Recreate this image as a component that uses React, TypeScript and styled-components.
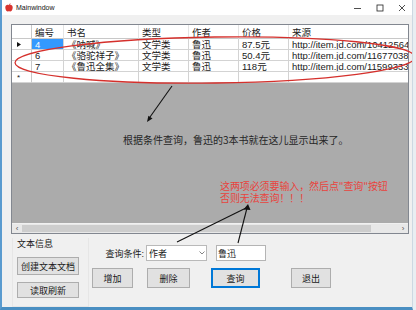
import React from 'react';
import styled, { createGlobalStyle } from 'styled-components';

const Global = createGlobalStyle`
  html, body { margin: 0; padding: 0; background: #e9eef2; }
  body { font-family: "Liberation Sans", "Noto Sans CJK SC", sans-serif; }
  * { box-sizing: border-box; }
`;

const Window = styled.div`
  position: relative;
  width: 413px;
  height: 310px;
  background: #f0f0f0;
  border-left: 2px solid #5a9bcf;
  border-bottom: 3px solid #4a8fc2;
  border-right: 1px solid #cdd8e2;
  display: flex;
  flex-direction: column;
  overflow: hidden;
`;

const TitleBar = styled.div`
  height: 15px;
  flex: none;
  background: #ffffff;
  display: flex;
  align-items: center;
  padding-left: 3px;
`;

const TitleText = styled.span`
  margin-left: 3px;
  font-size: 7px;
  color: #111;
  flex: 1;
`;

const Ctrl = styled.div<{ $w: number }>`
  width: ${(p) => p.$w}px;
  height: 15px;
  display: flex;
  align-items: center;
  justify-content: center;
`;

const Content = styled.div`
  flex: 1;
  display: flex;
  flex-direction: column;
  padding: 9px 3px 0 9px;
`;

const Grid = styled.div`
  height: 210px;
  flex: none;
  border: 1px solid #828790;
  background: #ababab;
  display: flex;
  flex-direction: column;
  font-size: 9.5px;
  color: #1a1a1a;
  overflow: hidden;
`;

const Row = styled.div<{ $h: number }>`
  display: grid;
  grid-template-columns: 20px 32px 75px 50px 50px 50px 1fr;
  height: ${(p) => p.$h}px;
  background: #ffffff;
  flex: none;
`;

const Cell = styled.div<{ $sel?: boolean; $head?: boolean }>`
  border-right: 1px solid ${(p) => (p.$head ? '#e4e4e4' : '#d3d3d3')};
  border-bottom: 1px solid ${(p) => (p.$head ? '#c8c8c8' : '#d3d3d3')};
  padding-left: 3px;
  display: flex;
  align-items: center;
  white-space: nowrap;
  overflow: hidden;
  background: ${(p) => (p.$sel ? '#3399ff' : '#ffffff')};
  color: ${(p) => (p.$sel ? '#ffffff' : '#1a1a1a')};
  &:last-child { border-right: none; }
`;

const RowHead = styled.div<{ $head?: boolean }>`
  border-right: 1px solid #c8c8c8;
  border-bottom: 1px solid ${(p) => (p.$head ? '#c8c8c8' : '#d3d3d3')};
  display: flex;
  align-items: center;
  padding-left: 5px;
  font-size: 8px;
  background: #ffffff;
`;

const Empty = styled.div`
  flex: 1;
`;

const ScrollBar = styled.div`
  height: 10px;
  flex: none;
  display: flex;
  background: #e8e8e8;
  border-top: 1px solid #f0f0f0;
`;

const ScrollArrow = styled.div`
  width: 10px;
  display: flex;
  align-items: center;
  justify-content: center;
  font-size: 8px;
  color: #555;
  line-height: 1;
`;

const Thumb = styled.div`
  width: 349px;
  background: #cdcdcd;
  margin: 1px 0;
`;

const Bottom = styled.div`
  flex: 1;
  display: flex;
  padding-top: 4px;
`;

const LeftGroup = styled.div`
  width: 77px;
  margin-left: 1px;
  display: flex;
  flex-direction: column;
  border: 1px solid #e6e6e6;
  border-top: none;
  padding: 0 0 8px 4px;
  margin-bottom: 3px;
`;

const GroupLabel = styled.div`
  font-size: 9px;
  color: #1a1a1a;
  height: 12px;
  line-height: 12px;
`;

const Btn = styled.div<{ $w: number; $h: number; $ml?: number; $mt?: number; $focus?: boolean }>`
  width: ${(p) => p.$w}px;
  height: ${(p) => p.$h}px;
  margin-left: ${(p) => p.$ml ?? 0}px;
  margin-top: ${(p) => p.$mt ?? 0}px;
  background: #e1e1e1;
  border: 1px solid ${(p) => (p.$focus ? '#0078d7' : '#adadad')};
  box-shadow: ${(p) => (p.$focus ? 'inset 0 0 0 1px #0078d7' : 'none')};
  display: flex;
  align-items: center;
  justify-content: center;
  font-size: 9px;
  color: #1a1a1a;
  flex: none;
`;

const RightArea = styled.div`
  display: flex;
  flex-direction: column;
  margin-left: 3px;
`;

const QueryRow = styled.div`
  display: flex;
  align-items: center;
  height: 16px;
  margin-top: 7px;
  padding-left: 10px;
`;

const QueryLabel = styled.div`
  width: 42px;
  text-align: right;
  font-size: 9px;
  color: #1a1a1a;
`;

const Combo = styled.div`
  width: 61px;
  height: 16px;
  margin-left: 2px;
  background: #fff;
  border: 1px solid #b9b9b9;
  display: flex;
  align-items: center;
  padding-left: 2px;
  font-size: 9px;
  color: #1a1a1a;
`;

const ComboText = styled.span`
  flex: 1;
`;

const TextBox = styled.div`
  width: 50px;
  height: 16px;
  margin-left: 9px;
  background: #fff;
  border: 1px solid #b4b4b4;
  display: flex;
  align-items: center;
  padding-left: 1px;
  font-size: 9px;
  color: #1a1a1a;
`;

const BtnRow = styled.div`
  display: flex;
  margin-top: 7px;
`;

const Overlay = styled.svg`
  position: absolute;
  left: -2px;
  top: 0;
  pointer-events: none;
`;

const Note = styled.div<{ $x: number; $y: number; $red?: boolean }>`
  position: absolute;
  left: ${(p) => p.$x - 2}px;
  top: ${(p) => p.$y}px;
  font-family: "Noto Sans CJK SC", sans-serif;
  font-size: 10px;
  line-height: 12px;
  color: ${(p) => (p.$red ? '#e8433d' : '#262626')};
  white-space: nowrap;
  letter-spacing: ${(p) => (p.$red ? '-0.1px' : '0')};
`;

const rows = [
  ['4', '《呐喊》', '文学类', '鲁迅', '87.5元', 'http://item.jd.com/1041256430'],
  ['6', '《骆驼祥子》', '文学类', '鲁迅', '50.4元', 'http://item.jd.com/11677038.html'],
  ['7', '《鲁迅全集》', '文学类', '鲁迅', '118元', 'http://item.jd.com/11599333.html'],
];

const headers = ['编号', '书名', '类型', '作者', '价格', '来源'];

export default function App() {
  return (
    <>
      <Global />
      <Window>
        <TitleBar>
          <svg width="8" height="9" viewBox="0 0 8 9">
            <path d="M4 2.2 C2.5 1.3 0.3 1.8 0.3 4.5 C0.3 6.8 1.8 8.8 3 8.6 C3.5 8.5 3.7 8.3 4 8.3 C4.3 8.3 4.5 8.5 5 8.6 C6.2 8.8 7.7 6.8 7.7 4.5 C7.7 1.8 5.5 1.3 4 2.2 Z" fill="#d8342f" />
            <path d="M4 2.2 C4.1 1.2 4.8 0.4 5.6 0.2 C5.4 1.2 4.8 1.9 4 2.2 Z" fill="#c0302a" />
          </svg>
          <TitleText>Mainwindow</TitleText>
          <Ctrl $w={22}>
            <svg width="8" height="8" viewBox="0 0 8 8"><line x1="0" y1="4.5" x2="7" y2="4.5" stroke="#222" strokeWidth="0.8" /></svg>
          </Ctrl>
          <Ctrl $w={22}>
            <svg width="8" height="8" viewBox="0 0 8 8"><rect x="1" y="1" width="6" height="6" fill="none" stroke="#222" strokeWidth="0.8" /></svg>
          </Ctrl>
          <Ctrl $w={21}>
            <svg width="8" height="8" viewBox="0 0 8 8"><path d="M1 1 L7 7 M7 1 L1 7" stroke="#222" strokeWidth="0.8" /></svg>
          </Ctrl>
        </TitleBar>
        <Content>
          <Grid>
            <Row $h={14}>
              <RowHead $head />
              {headers.map((h) => (
                <Cell key={h} $head>{h}</Cell>
              ))}
            </Row>
            {rows.map((r, i) => (
              <Row $h={11} key={i}>
                <RowHead>
                  {i === 0 && (
                    <svg width="4" height="5" viewBox="0 0 4 5"><path d="M0 0 L4 2.5 L0 5 Z" fill="#111" /></svg>
                  )}
                </RowHead>
                {r.map((c, j) => (
                  <Cell key={j} $sel={i === 0 && j === 0}>{c}</Cell>
                ))}
              </Row>
            ))}
            <Row $h={11}>
              <RowHead>*</RowHead>
              {headers.map((h) => (
                <Cell key={h} />
              ))}
            </Row>
            <Empty />
            <ScrollBar>
              <ScrollArrow>‹</ScrollArrow>
              <Thumb />
              <Empty />
              <ScrollArrow>›</ScrollArrow>
            </ScrollBar>
          </Grid>
          <Bottom>
            <LeftGroup>
              <GroupLabel>文本信息</GroupLabel>
              <Btn $w={62} $h={18} $mt={7}>创建文本文档</Btn>
              <Btn $w={62} $h={16} $mt={7}>读取刷新</Btn>
            </LeftGroup>
            <RightArea>
              <QueryRow>
                <QueryLabel>查询条件:</QueryLabel>
                <Combo>
                  <ComboText>作者</ComboText>
                  <svg width="8" height="6" viewBox="0 0 8 6"><path d="M1.5 1.5 L4 4 L6.5 1.5" fill="none" stroke="#666" strokeWidth="0.8" /></svg>
                </Combo>
                <TextBox>鲁迅</TextBox>
              </QueryRow>
              <BtnRow>
                <Btn $w={41} $h={20}>增加</Btn>
                <Btn $w={43} $h={20} $ml={14}>删除</Btn>
                <Btn $w={49} $h={20} $ml={21} $focus>查询</Btn>
                <Btn $w={40} $h={20} $ml={31}>退出</Btn>
              </BtnRow>
            </RightArea>
          </Bottom>
        </Content>
        <Note $x={123} $y={134}>根据条件查询，鲁迅的3本书就在这儿显示出来了。</Note>
        <Note $x={220} $y={180} $red>
          这两项必须要输入，然后点"查询"按钮
          <br />
          否则无法查询！！！
        </Note>
        <Overlay width="416" height="310" viewBox="0 0 416 310">
          <ellipse cx="215" cy="60" rx="200" ry="23" fill="none" stroke="#d5302c" strokeWidth="1.3" transform="rotate(-0.8 215 60)" />
          <line x1="172" y1="86" x2="150" y2="117" stroke="#111" strokeWidth="1.1" />
          <polygon points="147,122 152.5,118.5 148.4,115.7" fill="#111" />
          <line x1="246" y1="208" x2="177" y2="242" stroke="#111" strokeWidth="1.1" />
          <line x1="247" y1="208" x2="238" y2="243" stroke="#111" strokeWidth="1.1" />
          <polygon points="248,204 243.5,209.5 250.5,210" fill="#111" />
        </Overlay>
      </Window>
    </>
  );
}
